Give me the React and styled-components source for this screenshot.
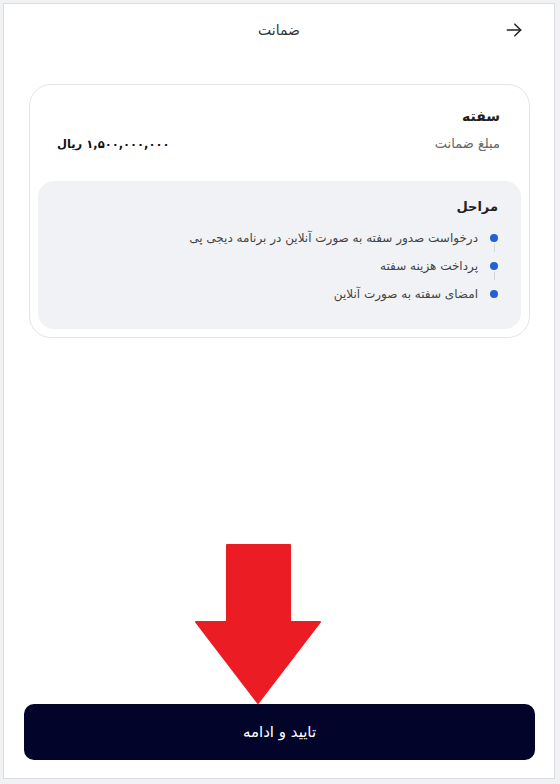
import React from "react";
import styled, { createGlobalStyle } from "styled-components";

const GlobalStyle = createGlobalStyle`
  html, body {
    margin: 0;
    padding: 0;
    background: #f1f2f4;
  }
  body {
    font-family: "DejaVu Sans", "Noto Sans", sans-serif;
  }
`;

const Frame = styled.div`
  position: relative;
  box-sizing: border-box;
  direction: rtl;
  margin: 3px 0 0 3px;
  width: 552px;
  height: 776px;
  background: #ffffff;
  border: 1px solid #dcdde0;
  display: flex;
  flex-direction: column;
`;

const Header = styled.div`
  display: grid;
  grid-template-columns: 60px 1fr 60px;
  align-items: center;
  height: 52px;
  padding: 0 30px 0 0;
`;

const BackButton = styled.button`
  display: flex;
  align-items: center;
  justify-content: flex-start;
  border: none;
  background: transparent;
  padding: 0;
  color: #222;
  cursor: pointer;
`;

const Title = styled.div`
  text-align: center;
  font-size: 14px;
  color: #333;
  padding-left: 30px;
`;

const Content = styled.div`
  flex: 1;
  padding: 28px 24px 0 25px;
`;

const Card = styled.div`
  border: 1px solid #e4e5e8;
  border-radius: 22px;
  padding: 23px 8px 8px 8px;
`;

const CardTitle = styled.div`
  font-size: 14px;
  font-weight: 700;
  color: #222;
  padding: 0 21px;
`;

const AmountRow = styled.div`
  display: flex;
  justify-content: space-between;
  align-items: center;
  margin-top: 12px;
  padding: 0 21px 0 19px;
`;

const Label = styled.span`
  font-size: 13px;
  color: #666;
`;

const Amount = styled.span`
  font-size: 11.5px;
  font-weight: 700;
  color: #111;
`;

const Steps = styled.div`
  margin-top: 30px;
  background: #f0f2f5;
  border-radius: 16px;
  padding: 18px 23px 21px;
`;

const StepsTitle = styled.div`
  font-size: 13px;
  font-weight: 700;
  color: #222;
  margin-bottom: 10px;
`;

const StepList = styled.ul`
  list-style: none;
  margin: 0;
  padding: 0;
`;

const Step = styled.li`
  position: relative;
  display: flex;
  align-items: center;
  gap: 12px;
  height: 28px;
  font-size: 12px;
  color: #444;

  &:not(:last-child)::after {
    content: "";
    position: absolute;
    right: 3.5px;
    top: 20px;
    width: 1px;
    height: 8px;
    background: #d2d4d8;
  }
`;

const Dot = styled.span`
  flex: none;
  width: 8px;
  height: 8px;
  border-radius: 50%;
  background: #2160d8;
`;

const Footer = styled.div`
  padding: 0 19px 18px 20px;
`;

const PrimaryButton = styled.button`
  width: 100%;
  height: 56px;
  border: none;
  border-radius: 10px;
  background: #02042a;
  color: #fff;
  font-family: inherit;
  font-size: 15px;
  cursor: pointer;
`;

const Annotation = styled.svg`
  position: absolute;
  left: 188px;
  top: 537px;
  pointer-events: none;
`;

const steps = [
  "درخواست صدور سفته به صورت آنلاین در برنامه دیجی پی",
  "پرداخت هزینه سفته",
  "امضای سفته به صورت آنلاین",
];

export default function App() {
  return (
    <>
      <GlobalStyle />
      <Frame>
        <Header>
          <BackButton aria-label="بازگشت">
            <svg width="20" height="20" viewBox="0 0 24 24" fill="none" stroke="currentColor" strokeWidth="1.8" strokeLinecap="round" strokeLinejoin="round">
              <path d="M4 12h16" />
              <path d="M13 5l7 7-7 7" />
            </svg>
          </BackButton>
          <Title>ضمانت</Title>
          <span />
        </Header>
        <Content>
          <Card>
            <CardTitle>سفته</CardTitle>
            <AmountRow>
              <Label>مبلغ ضمانت</Label>
              <Amount>۱,۵۰۰,۰۰۰,۰۰۰ ریال</Amount>
            </AmountRow>
            <Steps>
              <StepsTitle>مراحل</StepsTitle>
              <StepList>
                {steps.map((s) => (
                  <Step key={s}>
                    <Dot />
                    {s}
                  </Step>
                ))}
              </StepList>
            </Steps>
          </Card>
        </Content>
        <Footer>
          <PrimaryButton>تایید و ادامه</PrimaryButton>
        </Footer>
        <Annotation width="132" height="166" viewBox="0 0 132 166">
          <path
            d="M35 4 H98 V81 H128 L66 162 L4 81 H35 Z"
            fill="#ec1c24"
            stroke="#ec1c24"
            strokeWidth="2"
            strokeLinejoin="round"
          />
        </Annotation>
      </Frame>
    </>
  );
}
